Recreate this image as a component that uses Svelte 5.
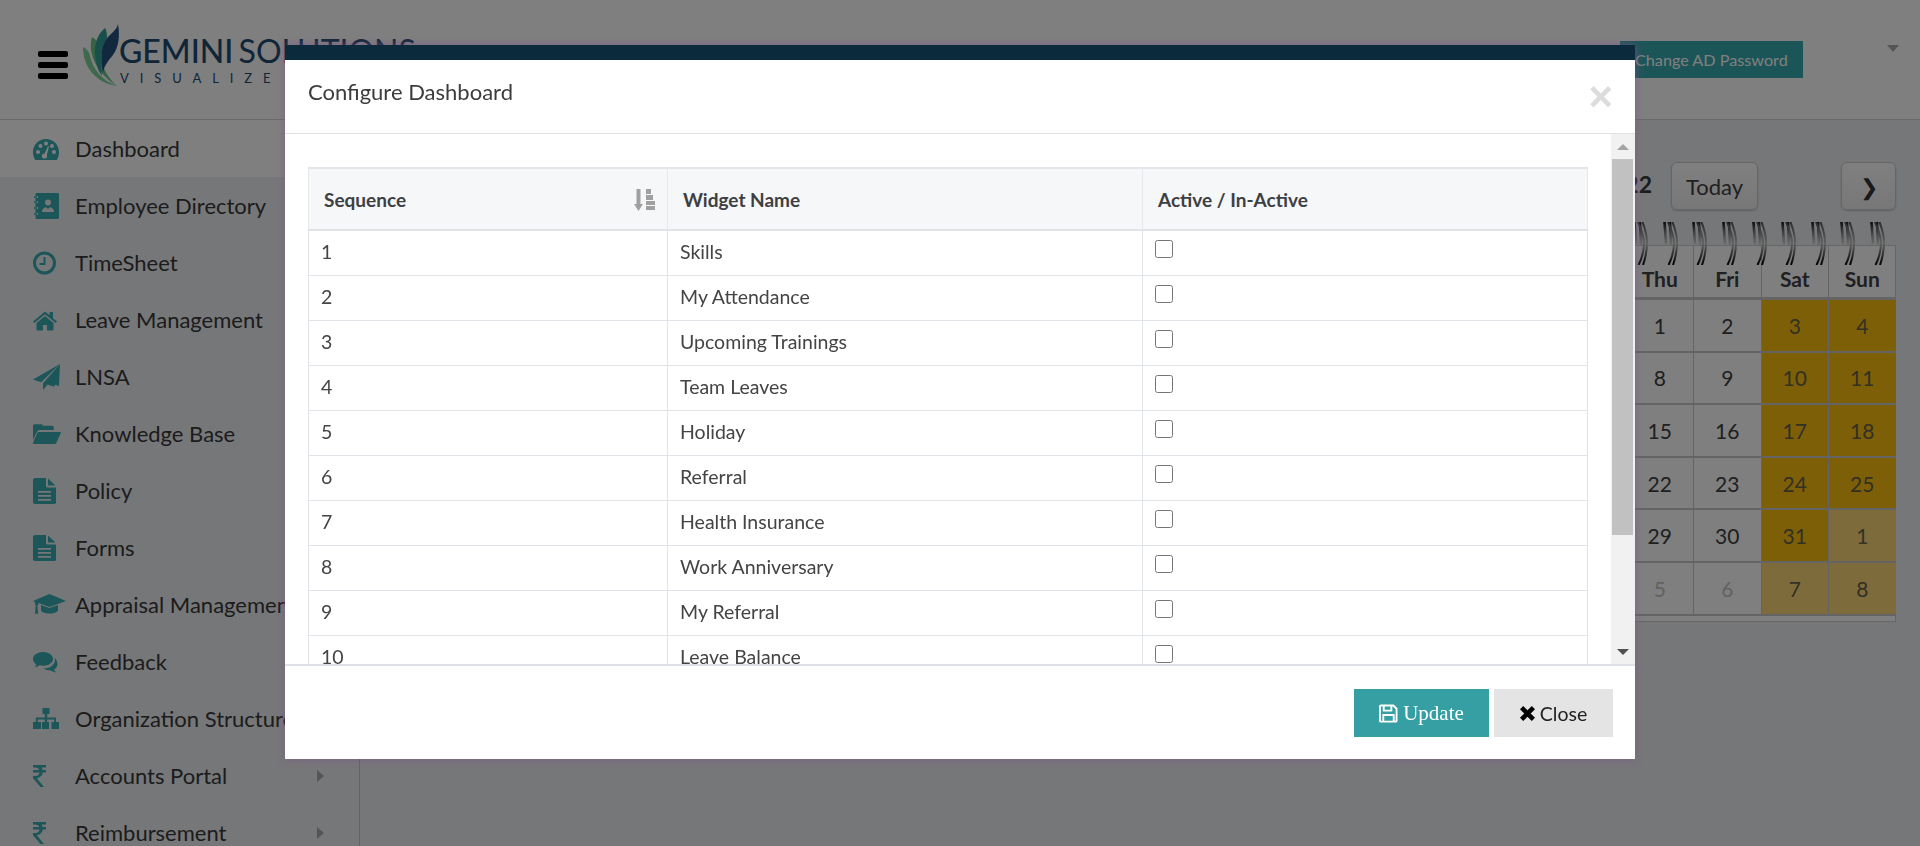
<script>
	const navItems = [
		{ label: 'Dashboard', icon: 'dashboard', active: true },
		{ label: 'Employee Directory', icon: 'book' },
		{ label: 'TimeSheet', icon: 'clock' },
		{ label: 'Leave Management', icon: 'home' },
		{ label: 'LNSA', icon: 'plane' },
		{ label: 'Knowledge Base', icon: 'folder' },
		{ label: 'Policy', icon: 'doc' },
		{ label: 'Forms', icon: 'doc' },
		{ label: 'Appraisal Management', icon: 'cap' },
		{ label: 'Feedback', icon: 'comments' },
		{ label: 'Organization Structure', icon: 'sitemap' },
		{ label: 'Accounts Portal', icon: 'rupee', arrow: true },
		{ label: 'Reimbursement', icon: 'rupee', arrow: true }
	];

	const icons = {
		dashboard:
			'<path d="M14 4C6.8 4 1 9.800 1 17c0 2.900.8 5.700 2.200 8h21.600c1.400-2.300 2.200-5.100 2.200-8 0-7.200-5.800-13-13-13z"/><g fill="#fff"><circle cx="6" cy="17" r="2"/><circle cx="8.500" cy="11" r="2"/><circle cx="14" cy="8.500" r="2"/><circle cx="22" cy="17" r="2"/><circle cx="20" cy="11" r="2"/><circle cx="12.500" cy="21" r="2.600"/><path d="M12 20l4-9 1 .5-2.500 10z"/></g>',
		book:
			'<path d="M5 1h20.500c.8 0 1.500.7 1.500 1.500v23c0 .8-.7 1.500-1.500 1.500H5c-.8 0-1.500-.7-1.500-1.500V23H6v-2H3.500v-4H6v-2H3.500v-4H6V9H3.500V6H6V4H3.500V2.500C3.500 1.700 4.200 1 5 1z"/><path d="M2 4.200h3v1.600H2zM2 9.200h3v1.600H2zM2 15.200h3v1.600H2zM2 21.200h3v1.600H2z"/><g fill="#edeff2"><circle cx="16" cy="10.500" r="3"/><path d="M10 20c0-3 2-4.300 4-4.800l2 1.800 2-1.800c2 .5 4 1.800 4 4.800z"/></g>',
		clock:
			'<circle cx="12.500" cy="14" r="10" fill="none" stroke="currentColor" stroke-width="3"/><path d="M11.500 8h2v8H7.500v-2h4z"/>',
		home:
			'<path d="M13 5.500L1 15.500l1.300 1.500L13 8.200 23.700 17l1.300-1.500-4-3.300V6h-3.500v3.300z"/><path d="M13 10L4.500 17v6.500c0 .6.400 1 1 1H11v-5.500h4v5.500h5.500c.6 0 1-.4 1-1V17z"/>',
		plane:
			'<path d="M28 1L1 16.500l8 2.700L28 1zM28 1L11 20.200v6.800l4.500-5.500 5 1.800 2 .2z"/><path d="M28 1l-1 22-6.500-2.200L28 1z"/>',
		folder:
			'<path d="M1 6c0-1 .8-1.800 1.800-1.800H9c1 0 1.600.6 2 1.600h9c1 0 1.800.8 1.800 1.800V10H8c-1.500 0-2.500.8-3.100 2L1 20V6z"/><path d="M6.500 12h21.500c.6 0 1 .6.700 1.200l-4.500 9.800c-.3.700-1 1-1.700 1H1.700c-.6 0-1-.6-.7-1.200l4-9.300c.3-.8.800-1.500 1.500-1.500z"/>',
		doc:
			'<path d="M3 1h11v8c0 .9.600 1.500 1.500 1.500H24V25.500c0 .8-.7 1.500-1.500 1.500h-19C2.200 27 1 26.300 1 25.500V3c0-1 1-2 2-2zM16 1.500L23.500 8.500H16zM6 14v1.700h13V14zM6 18v1.700h13V18zM6 22v1.700h13V22z" fill-rule="evenodd"/>',
		cap:
			'<g transform="translate(1 3)"><path d="M16.500 0L33 7 16.500 13 5.500 9v1.500l-1 .8.500 8.500H2l.7-8.500-.7-1V8L0 7z"/><path d="M8 11l8.500 3 8.500-3v5c0 2-4 3.500-8.500 3.500S8 18 8 16z"/></g>',
		comments:
			'<path d="M11 4C5.500 4 1 7.100 1 11c0 2.200 1.300 4.200 3.400 5.500-.3 1-1 2-1.800 2.800 2-.2 3.600-1 4.900-2 1.100.3 2.300.5 3.500.5 5.500 0 10-3 10-6.800S16.500 4 11 4z"/><path d="M23.500 8.500c.3.800.5 1.600.5 2.500 0 5-5.300 8.500-11.500 8.300 1.900 1.500 4.300 2.200 7 2 1.300 1 3 1.900 5.500 2.200-.8-1-1.500-2-1.800-3 1.900-1.200 3.300-3 3.300-5.200 0-2.700-1.300-5-3-6.800z" transform="translate(-1 1)"/>',
		sitemap:
			'<path d="M10.500 3h7v6h-2.300v3.500H24v4.500h3v7h-7.500v-7h2.700v-2.500h-7v2.500H17v7h-7v-7h2.800v-2.500H5.800v2.500H9v7H1v-7h2.800v-4.500h9V9h-2.300z"/>',
		rupee:
			'<path d="M1 3h13v2.400H9.500c.6.800 1 1.700 1.200 2.700H14v2.400h-3.200c-.5 3.100-2.700 5.200-6 5.700L12 25h-3.500L1 16.200v-2.200h2.500c2 0 3.600-1.100 4-3.500H1V8.100h6.300C6.700 6.400 5.300 5.400 3.200 5.400H1z"/>'
	};

	const widgets = [
		'Skills',
		'My Attendance',
		'Upcoming Trainings',
		'Team Leaves',
		'Holiday',
		'Referral',
		'Health Insurance',
		'Work Anniversary',
		'My Referral',
		'Leave Balance'
	];

	const weekDays = ['Mon', 'Tue', 'Wed', 'Thu', 'Fri', 'Sat', 'Sun'];
	const weeks = [
		[28, 29, 30, 1, 2, 3, 4],
		[5, 6, 7, 8, 9, 10, 11],
		[12, 13, 14, 15, 16, 17, 18],
		[19, 20, 21, 22, 23, 24, 25],
		[26, 27, 28, 29, 30, 31, 1],
		[2, 3, 4, 5, 6, 7, 8]
	];

	function dayClass(w, d) {
		const outside = (w === 0 && d < 3) || (w === 4 && d === 6) || w === 5;
		if (d >= 5) return outside ? 'cell weekend outside' : 'cell weekend';
		return outside ? 'cell faded' : 'cell';
	}
</script>

<div class="page">
	<header class="topbar">
		<div class="burger"><span></span><span></span><span></span></div>
		<div class="logo">
			<svg class="leaves" viewBox="0 0 42 70" width="42" height="70">
				<path fill="#7fd29a" d="M3 27c0 20 13 36 34 39-14-5-24-16-27-30-1-5-3-7-7-9z" />
				<path fill="#6fc48c" d="M12 17c-4 14 2 34 25 49-11-10-17-22-16-36 0-5-3-9-9-13z" />
				<path fill="#35a097" d="M25 8c-9 7-12 20-9 34 1 5 3 10 6 14-2-14-1-26 5-38 0-4 0-7-2-10z" />
				<path fill="#25507e" d="M38 4c-1 5-5 8-10 13-7 8-8 22-5 36 1-7 5-12 10-18 6-8 7-20 5-31z" />
			</svg>
			<div class="wordmark">
				<div class="brand"><b>GEMINI</b> <span>SOLUTIONS</span></div>
				<div class="tagline">VISUALIZE</div>
			</div>
		</div>
		<button class="ad-btn">Change AD Password</button>
		<i class="user-caret"></i>
	</header>

	<div class="content">
		<nav class="sidebar">
			{#each navItems as item}
				<div class="nav-item" class:active={item.active}>
					<svg viewBox="0 0 34 28" width="34" height="28" fill="currentColor">
						{@html icons[item.icon]}
					</svg>
					<span>{item.label}</span>
					{#if item.arrow}<i class="nav-arrow"></i>{/if}
				</div>
			{/each}
		</nav>

		<main class="main">
			<section class="calendar">
				<div class="cal-toolbar">
					<h2>December 2022</h2>
					<button class="cal-btn">Today</button>
					<button class="cal-btn next">❯</button>
				</div>
				<div class="cal-sheet">
					<div class="rings">
						{#each Array(16) as _, i}
							<svg viewBox="0 0 15 43" width="15" height="43" fill="none">
								{#if i === 0}
									<defs>
										<linearGradient id="ring-long" gradientUnits="userSpaceOnUse" x1="0" y1="0" x2="0" y2="43">
											<stop offset="0" stop-color="#555" />
											<stop offset="0.5" stop-color="#c4c4c4" />
											<stop offset="1" stop-color="#000" />
										</linearGradient>
										<linearGradient id="ring-short" gradientUnits="userSpaceOnUse" x1="0" y1="0" x2="0" y2="23">
											<stop offset="0" stop-color="#111" />
											<stop offset="1" stop-color="#999" stop-opacity="0.3" />
										</linearGradient>
									</defs>
								{/if}
								<path stroke="url(#ring-short)" stroke-width="2.600" d="M1.500 0l1.500 22M7 0l1 23" />
								<path stroke="url(#ring-long)" stroke-width="2" d="M9.500 0c3 8 4.500 14 4.500 20 0 8-1.500 16-4 23M5 0c4 9 6 15 6 21 0 7-2 15-5.500 22" />
							</svg>
						{/each}
					</div>
					<div class="grid">
						{#each weekDays as day}
							<div class="head">{day}</div>
						{/each}
						{#each weeks as week, w}
							{#each week as day, d}
								<div class={dayClass(w, d)}>{day}</div>
							{/each}
						{/each}
					</div>
				</div>
			</section>
		</main>
	</div>
</div>

<div class="backdrop"></div>

<div class="modal">
	<div class="modal-header">
		<h4>Configure Dashboard</h4>
		<span class="modal-x">×</span>
	</div>
	<div class="modal-body">
		<div class="scroll-area">
			<table>
				<thead>
					<tr>
						<th class="seq">
							Sequence
							<svg class="sort" viewBox="0 0 21 22" width="21" height="22" fill="#a0a0a0">
								<path d="M2.500 0h4v15h2.500l-4.500 7-4.500-7h2.500zM12 0h5v5h-5zM12 6h7v5h-7zM12 12h9v4h-9zM12 17h9v4h-9z" />
							</svg>
						</th>
						<th>Widget Name</th>
						<th>Active / In-Active</th>
					</tr>
				</thead>
				<tbody>
					{#each widgets as name, i}
						<tr>
							<td>{i + 1}</td>
							<td>{name}</td>
							<td class="check"><input type="checkbox" /></td>
						</tr>
					{/each}
				</tbody>
			</table>
		</div>
		<div class="scrollbar">
			<i class="up"></i>
			<div class="thumb"></div>
			<i class="down"></i>
		</div>
	</div>
	<div class="modal-footer">
		<button class="btn update">
			<svg viewBox="0 0 20 20" width="19" height="19" fill="none" stroke="#fff" stroke-width="2">
				<path d="M2 1.500h13l3.500 3.500v12.500a1 1 0 0 1-1 1H2a1 1 0 0 1-1-1v-15a1 1 0 0 1 1-1z" />
				<path d="M5 2v5h8V2M4.500 18.500v-7h11v7" />
			</svg>
			Update
		</button>
		<button class="btn close">
			<svg viewBox="0 0 14 14" width="15" height="15" fill="#000">
				<path d="M3 0l4 4 4-4 3 3-4 4 4 4-3 3-4-4-4 4-3-3 4-4-4-4z" />
			</svg>
			Close
		</button>
	</div>
</div>

<style>
	:global(body) {
		font-family: Lato, 'Open Sans', sans-serif;
		overflow: hidden;
	}

	.page {
		height: 846px;
		overflow: hidden;
		display: flex;
		flex-direction: column;
		background: #edeff2;
		color: #383838;
	}

	.topbar {
		height: 119px;
		flex: none;
		display: flex;
		align-items: flex-start;
		background: #fff;
		border-bottom: 1px solid #d4d4d4;
		position: relative;
	}

	.burger {
		margin: 51px 0 0 38px;
		display: flex;
		flex-direction: column;
		gap: 5px;
		width: 30px;
	}

	.burger span {
		height: 6px;
		border-radius: 2px;
		background: #000;
	}

	.logo {
		display: flex;
		margin: 20px 0 0 12px;
	}

	.wordmark {
		margin: 15px 0 0 -3px;
	}

	.brand {
		font-size: 32px;
		line-height: 32px;
		color: #1f4a70;
		white-space: nowrap;
		font-family: Lato, sans-serif;
		word-spacing: -3px;
	}

	.brand b {
		font-weight: 500;
	}

	.brand span {
		font-weight: 400;
	}

	.tagline {
		margin-top: 4px;
		margin-left: 1px;
		font-size: 13px;
		line-height: 15px;
		letter-spacing: 10.9px;
		color: #1f4a70;
	}

	.ad-btn {
		position: absolute;
		left: 1620px;
		top: 41px;
		width: 183px;
		height: 37px;
		border: 0;
		padding: 0 0 0 15px;
		text-align: left;
		background: #38aaae;
		color: #fff;
		font: 16.200px Lato, sans-serif;
	}

	.user-caret {
		position: absolute;
		left: 1887px;
		top: 45px;
		border: 6px solid transparent;
		border-top: 7px solid #aaa;
		border-bottom: 0;
	}

	.content {
		flex: 1;
		display: flex;
		min-height: 0;
	}

	.sidebar {
		width: 359px;
		flex: none;
		border-right: 1px solid #c8c8c8;
	}

	.nav-item {
		height: 57px;
		flex: none;
		display: flex;
		align-items: center;
		padding-left: 32px;
		font-size: 22px;
		white-space: nowrap;
		position: relative;
	}

	.nav-item.active {
		background: #fff;
	}

	.nav-item svg {
		color: #38acb0;
		margin-right: 9px;
		flex: none;
	}

	.nav-arrow {
		position: absolute;
		left: 317px;
		top: 23px;
		border: 6px solid transparent;
		border-left: 7px solid #aaa;
		border-right: 0;
	}

	.main {
		flex: 1;
		display: flex;
		justify-content: flex-end;
		padding: 42px 24px 0 0;
	}

	.calendar {
		width: 473px;
	}

	.cal-toolbar {
		display: flex;
		align-items: center;
		height: 48px;
	}

	.cal-toolbar h2 {
		margin: 0 19px 4px auto;
		font-size: 23px;
		font-weight: 700;
		line-height: 40px;
	}

	.cal-btn {
		width: 87px;
		height: 48px;
		border: 1px solid #ccc;
		border-radius: 6px;
		background: linear-gradient(#fff, #f0f0f0);
		color: #404040;
		font: 22px Lato, sans-serif;
		box-shadow: 0 1px 2px rgba(0, 0, 0, 0.2);
	}

	.cal-btn.next {
		width: 55px;
		margin-left: 83px;
		font-size: 22px;
		color: #333;
	}

	.cal-sheet {
		position: relative;
		margin-top: 35px;
	}

	.rings {
		position: absolute;
		top: -23px;
		right: 11px;
		display: flex;
		gap: 14.600px;
	}

	.grid {
		display: grid;
		grid-template-columns: repeat(7, 67.5px);
		grid-template-rows: 54px repeat(6, 52.6px);
		border-right: 1px solid #ccc;
		border-top: 1px solid #ccc;
		border-bottom: 1px solid #ccc;
		padding-bottom: 5px;
		background: #fff;
	}

	.head,
	.cell {
		display: flex;
		align-items: center;
		justify-content: center;
		border-left: 1px solid #c8c8c8;
		border-bottom: 2px solid #c8c8c8;
		font-size: 21px;
		color: #404040;
	}

	.head {
		padding-top: 14px;
		font-weight: 700;
		border-bottom-width: 3px;
	}

	.cell.weekend {
		background: #fbbf11;
		color: #666048;
	}

	.cell.weekend.outside {
		background: #fdd677;
	}

	.cell.faded {
		color: #c4c4c4;
	}

	.backdrop {
		position: fixed;
		inset: 0;
		background: rgba(0, 0, 0, 0.5);
	}

	.modal {
		position: fixed;
		left: 285px;
		top: 45px;
		width: 1350px;
		height: 714px;
		box-sizing: border-box;
		border-top: 15px solid #0b2a3b;
		background: #fff;
		display: flex;
		flex-direction: column;
		box-shadow: 0 0 9px rgba(125, 85, 140, 0.7);
		color: #333;
	}

	.modal-header {
		height: 73px;
		flex: none;
		border-bottom: 1px solid #dee2e6;
		position: relative;
		box-sizing: content-box;
	}

	.modal-header h4 {
		margin: 20px 0 0 23px;
		font-size: 22px;
		line-height: 24px;
		font-weight: 400;
		color: #3c3c3c;
	}

	.modal-x {
		position: absolute;
		right: 22px;
		top: 17px;
		font: 700 42px/40px 'Liberation Sans', sans-serif;
		color: #dcdcdc;
	}

	.modal-body {
		flex: 1;
		min-height: 0;
		display: flex;
		border-bottom: 2px solid #dee2e6;
	}

	.scroll-area {
		flex: 1;
		overflow: hidden;
		padding: 33px 22px 0 23px;
	}

	table {
		width: 1280px;
		table-layout: fixed;
		border-collapse: collapse;
		font-size: 19.500px;
		color: #444;
	}

	th:nth-child(1),
	td:nth-child(1) {
		width: 359px;
	}

	th:nth-child(2),
	td:nth-child(2) {
		width: 475px;
	}

	th {
		height: 62px;
		box-sizing: border-box;
		text-align: left;
		padding: 0 15px;
		font-size: 19px;
		font-weight: 700;
		background: #f6f7f9;
		color: #3d4043;
		border: 1px solid #e6e9ec;
		border-top: 2px solid #e2e6ea;
		border-bottom: 2px solid #e0e4e8;
		position: relative;
	}

	td {
		height: 45px;
		box-sizing: border-box;
		padding: 0 12px 3px;
		border: 1px solid #e0e4e8;
	}

	.sort {
		position: absolute;
		right: 12px;
		top: 20px;
	}

	.check {
		vertical-align: top;
		padding-top: 9px;
	}

	input {
		width: 18px;
		height: 18px;
		margin: 0;
		display: block;
	}

	.scrollbar {
		width: 25px;
		flex: none;
		background: #f1f1f1;
		position: relative;
		box-sizing: border-box;
		padding-top: 25px;
		border-left: 1px solid #fff;
	}

	.thumb {
		width: 21px;
		height: 376px;
		margin-left: 1px;
		background: #c1c1c1;
	}

	.up,
	.down {
		position: absolute;
		left: 6px;
		border: 6px solid transparent;
		border-top: 0;
		border-bottom: 6px solid #a3a3a3;
	}

	.up {
		top: 10px;
	}

	.down {
		bottom: 9px;
		border-top: 6px solid #505050;
		border-bottom: 0;
	}

	.modal-footer {
		height: 70px;
		flex: none;
		display: flex;
		justify-content: flex-end;
		gap: 5px;
		padding: 23px 22px 0 0;
	}

	.btn {
		height: 48px;
		border: 0;
		display: flex;
		align-items: center;
		justify-content: center;
		gap: 5px;
		font-size: 20px;
	}

	.update {
		width: 135px;
		background: #359fa3;
		color: #fff;
		font-family: 'Liberation Serif', serif;
		font-size: 21px;
	}

	.close {
		width: 119px;
		background: #e4e4e4;
		color: #222;
		font-family: Lato, sans-serif;
		font-size: 19.500px;
	}
</style>
